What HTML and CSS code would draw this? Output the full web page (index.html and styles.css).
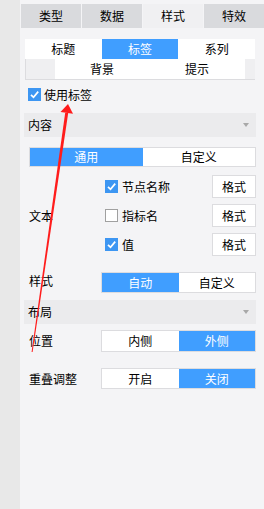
FILE: index.html
```html
<!DOCTYPE html>
<html lang="zh">
<head>
<meta charset="utf-8">
<link rel="stylesheet" href="styles.css">
</head>
<body>
<div class="strip"></div>
<div class="panel">
  <div class="tabs">
    <div class="tab">类型</div>
    <div class="tab">数据</div>
    <div class="tab active">样式</div>
    <div class="tab">特效</div>
  </div>

  <div class="subtabs">
    <div class="subrow">
      <div class="sub">标题</div>
      <div class="sub on">标签</div>
      <div class="sub">系列</div>
    </div>
    <div class="subrow center">
      <div class="sub wide">背景</div>
      <div class="sub wide">提示</div>
    </div>
  </div>

  <label class="check-row top-check">
    <span class="cb checked"><svg viewBox="0 0 13 13"><path d="M3 6.8 L5.5 9.3 L10.2 3.6"/></svg></span>
    <span>使用标签</span>
  </label>

  <div class="section">内容<span class="caret"></span></div>

  <div class="seg full">
    <div class="seg-btn on">通用</div>
    <div class="seg-btn">自定义</div>
  </div>

  <div class="text-group">
    <div class="label">文本</div>
    <div class="items">
      <div class="item">
        <span class="cb checked"><svg viewBox="0 0 13 13"><path d="M3 6.8 L5.5 9.3 L10.2 3.6"/></svg></span>
        <span class="item-text">节点名称</span>
        <div class="fmt">格式</div>
      </div>
      <div class="item">
        <span class="cb"></span>
        <span class="item-text">指标名</span>
        <div class="fmt">格式</div>
      </div>
      <div class="item">
        <span class="cb checked"><svg viewBox="0 0 13 13"><path d="M3 6.8 L5.5 9.3 L10.2 3.6"/></svg></span>
        <span class="item-text">值</span>
        <div class="fmt">格式</div>
      </div>
    </div>
  </div>

  <div class="row style-row">
    <div class="label raise">样式</div>
    <div class="seg half">
      <div class="seg-btn on">自动</div>
      <div class="seg-btn">自定义</div>
    </div>
  </div>

  <div class="section layout-sec">布局<span class="caret"></span></div>

  <div class="row pos-row">
    <div class="label">位置</div>
    <div class="seg half">
      <div class="seg-btn">内侧</div>
      <div class="seg-btn on">外侧</div>
    </div>
  </div>

  <div class="row overlap-row">
    <div class="label">重叠调整</div>
    <div class="seg half">
      <div class="seg-btn">开启</div>
      <div class="seg-btn on">关闭</div>
    </div>
  </div>
</div>

<svg class="arrow" width="264" height="509" viewBox="0 0 264 509">
  <polygon points="65.2,112.7 68.2,113.1 32.6,352.1 31.6,351.9" fill="#ff1c1c"/>
  <polygon points="68,104 60.5,112 73,113.8" fill="#ff1c1c"/>
</svg>
</body>
</html>
```

FILE: styles.css
```css
* { box-sizing: border-box; }
html, body { margin: 0; padding: 0; }
body {
  width: 264px;
  height: 509px;
  display: flex;
  font-family: "Noto Sans CJK SC", "Noto Sans", sans-serif;
  font-size: 12px;
  line-height: 16px;
  color: #000;
  background: #f4f4f6;
  overflow: hidden;
  position: relative;
}
.strip { width: 20px; background: #e8e8e8; flex: none; }
.panel { flex: 1; display: flex; flex-direction: column; background: #f4f4f6; }

.tabs { display: flex; gap: 1px; margin-top: 4px; padding-left: 1px; height: 24px; flex: none; }
.tab {
  width: 60px; background: #d9dadd;
  display: flex; align-items: center; justify-content: center;
}
.tab.active { background: #f0f0f2; }

.subtabs {
  margin: 11px 0 0 5px; width: 230px; flex: none;
  background: #efeff1;
  border-left: 1px solid #dcdcdf;
  border-bottom: 1px solid #dcdcdf;
}
.subrow { display: flex; height: 20px; }
.subrow.center { justify-content: center; padding-left: 18px; }
.subtabs .subrow:first-child { margin-left: -1px; }
.sub {
  flex: 1; background: #fff;
  display: flex; align-items: center; justify-content: center;
}
.sub.wide { flex: none; width: 95px; }
.sub.on { background: #409eff; color: #fff; }

.check-row { display: flex; align-items: center; gap: 3px; margin: 8px 0 0 8px; height: 13px; flex: none; }
.cb {
  width: 13px; height: 13px; flex: none;
  border: 1px solid #a0a0a0; background: #fff;
  display: inline-flex;
}
.cb.checked { background: #3d96f2; border-color: #3d96f2; }
.cb svg { width: 13px; height: 13px; margin: -1px; }
.cb svg path { fill: none; stroke: #fff; stroke-width: 1.7; }

.section {
  margin: 12px 8px 0 4px; height: 24px; flex: none;
  background: #ebebed;
  display: flex; align-items: center; justify-content: space-between;
  padding: 0 7px 0 4px;
}
.caret {
  width: 0; height: 0;
  border-left: 3.5px solid transparent;
  border-right: 3.5px solid transparent;
  border-top: 4px solid #a8a8a8;
}

.seg { display: flex; border: 1px solid #dcdcdf; background: #fff; flex: none; }
.seg.full { margin: 10px 8px 0 9px; height: 20px; }
.seg-btn {
  flex: 1; display: flex; align-items: center; justify-content: center;
  background: #fff;
}
.seg-btn.on { background: #409eff; color: #fff; }

.text-group { display: flex; align-items: center; margin: 8px 8px 0 9px; flex: none; }
.label { width: 72px; flex: none; }
.items { flex: 1; display: flex; flex-direction: column; gap: 6px; padding-left: 4px; }
.item { display: flex; align-items: center; height: 23px; }
.item-text { margin-left: 4px; flex: 1; }
.fmt {
  width: 44px; height: 23px; background: #fff; border: 1px solid #dcdcdf;
  display: flex; align-items: center; justify-content: center;
}

.row { display: flex; align-items: center; margin: 0 8px 0 9px; flex: none; }
.row .seg.half { flex: 1; height: 21px; }
.style-row { margin-top: 16px; }
.raise { position: relative; top: -2px; }
.layout-sec { margin-top: 7px; }
.pos-row { margin-top: 6px; }
.pos-row .seg.half { height: 22px; }
.overlap-row { margin-top: 16px; }

.arrow { position: absolute; left: 0; top: 0; pointer-events: none; }
```
